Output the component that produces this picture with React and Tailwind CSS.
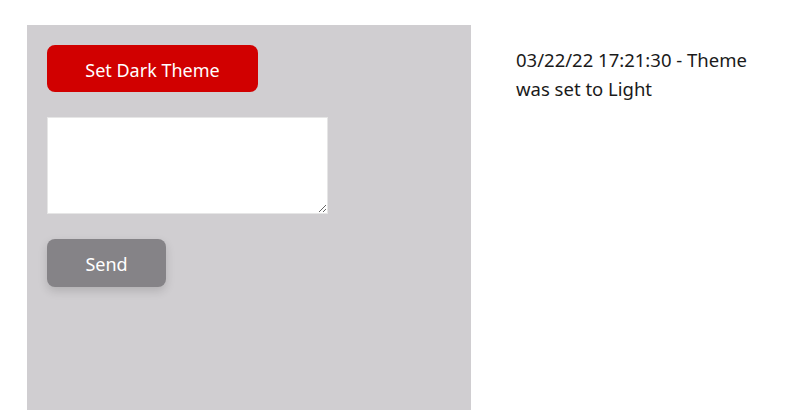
export default function App() {
  return (
    <div className="min-h-[410px] bg-white pl-[27px] pt-[25px] flex items-start font-['Noto_Sans',sans-serif]">
      <div className="w-[444px] h-[385px] bg-[#d0ced1] pl-5 pt-5 flex flex-col items-start">
        <button className="w-[211px] h-[47px] pt-[3px] rounded-lg bg-[#d10000] text-white text-[18px]">
          Set Dark Theme
        </button>
        <textarea className="mt-[25px] w-[281px] h-[97px] bg-white border border-[#e6e6e6] resize" />
        <button className="mt-[25px] w-[119px] h-[48px] pt-[3px] rounded-lg bg-[#858387] text-white text-[18px] shadow-[0_4px_10px_rgba(0,0,0,0.15)]">
          Send
        </button>
      </div>
      <div className="ml-[45px] mt-[20px] w-[240px] text-[18.5px] leading-[29px] text-[#1a1a1a]">
        03/22/22 17:21:30 - Theme was set to Light
      </div>
    </div>
  );
}
